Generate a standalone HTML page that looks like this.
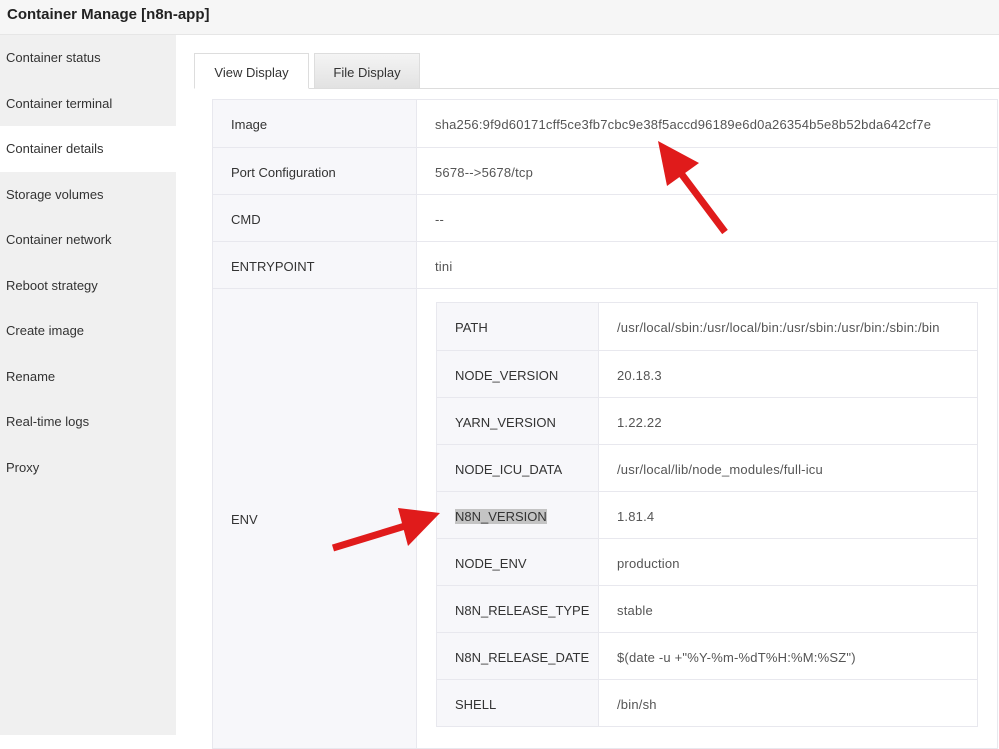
<!DOCTYPE html>
<html><head><style>
*{box-sizing:border-box;margin:0;padding:0}
body{width:999px;height:731px;overflow:hidden;background:#fff;font-family:"Liberation Sans","DejaVu Sans",sans-serif;font-size:13px;color:#333;position:relative}
.hd{position:absolute;left:0;top:0;width:999px;height:35px;background:#f6f6f6;border-bottom:1px solid #e6e6e6;font-size:15px;font-weight:bold;padding:6px 7px;color:#222}
.sb{position:absolute;left:0;top:35px;width:176px;height:700px;background:#f0f0f0}
.sb div{height:45.5px;line-height:45px;padding-left:6px;font-size:13px;color:#333}
.sb .on{background:#fff}
.tab{position:absolute;top:53px;height:36px;line-height:38px;text-align:center;border:1px solid #ddd;font-size:13px}
.line{position:absolute;left:194px;top:88px;width:805px;border-top:1px solid #ddd}
table{border-collapse:collapse;position:absolute}
td{border:1px solid #e8e8ee;padding-left:18px;font-size:13px;padding-top:2px}
td.l{background:#f7f7fa;color:#333}
td.v{color:#555;letter-spacing:0.2px}
</style></head><body>
<div class="hd">Container Manage [n8n-app]</div>
<div class="sb">
<div>Container status</div><div>Container terminal</div><div class="on">Container details</div><div>Storage volumes</div><div>Container network</div><div>Reboot strategy</div><div>Create image</div><div>Rename</div><div>Real-time logs</div><div>Proxy</div>
</div>
<div class="line"></div>
<div class="tab" style="left:194px;width:115px;background:#fff;border-bottom-color:#fff">View Display</div>
<div class="tab" style="left:314px;width:106px;background:linear-gradient(#f4f4f4,#e2e2e2)">File Display</div>
<table style="left:212px;top:99px;width:786px">
<tr style="height:48px"><td class="l" style="width:204px">Image</td><td class="v">sha256:9f9d60171cff5ce3fb7cbc9e38f5accd96189e6d0a26354b5e8b52bda642cf7e</td></tr>
<tr style="height:47px"><td class="l">Port Configuration</td><td class="v">5678--&gt;5678/tcp</td></tr>
<tr style="height:47px"><td class="l">CMD</td><td class="v">--</td></tr>
<tr style="height:47px"><td class="l">ENTRYPOINT</td><td class="v">tini</td></tr>
<tr style="height:460px"><td class="l">ENV</td><td></td></tr>
</table>
<table style="left:436px;top:302px;width:542px">
<tr style="height:48px"><td class="l" style="width:162px">PATH</td><td class="v">/usr/local/sbin:/usr/local/bin:/usr/sbin:/usr/bin:/sbin:/bin</td></tr>
<tr style="height:47px"><td class="l">NODE_VERSION</td><td class="v">20.18.3</td></tr>
<tr style="height:47px"><td class="l">YARN_VERSION</td><td class="v">1.22.22</td></tr>
<tr style="height:47px"><td class="l">NODE_ICU_DATA</td><td class="v">/usr/local/lib/node_modules/full-icu</td></tr>
<tr style="height:47px"><td class="l"><span style="background:#c4c4c4">N8N_VERSION</span></td><td class="v">1.81.4</td></tr>
<tr style="height:47px"><td class="l">NODE_ENV</td><td class="v">production</td></tr>
<tr style="height:47px"><td class="l">N8N_RELEASE_TYPE</td><td class="v">stable</td></tr>
<tr style="height:47px"><td class="l">N8N_RELEASE_DATE</td><td class="v">$(date -u +"%Y-%m-%dT%H:%M:%SZ")</td></tr>
<tr style="height:47px"><td class="l">SHELL</td><td class="v">/bin/sh</td></tr>
</table>
<svg width="999" height="731" style="position:absolute;left:0;top:0">
<line x1="725" y1="232" x2="680" y2="172" stroke="#e01b1b" stroke-width="7"/>
<polygon points="658,141 699,163 667,186" fill="#e01b1b"/>
<line x1="333" y1="548" x2="405" y2="526" stroke="#e01b1b" stroke-width="7"/>
<polygon points="440,513 398,508 408,546" fill="#e01b1b"/>
</svg>
</body></html>
